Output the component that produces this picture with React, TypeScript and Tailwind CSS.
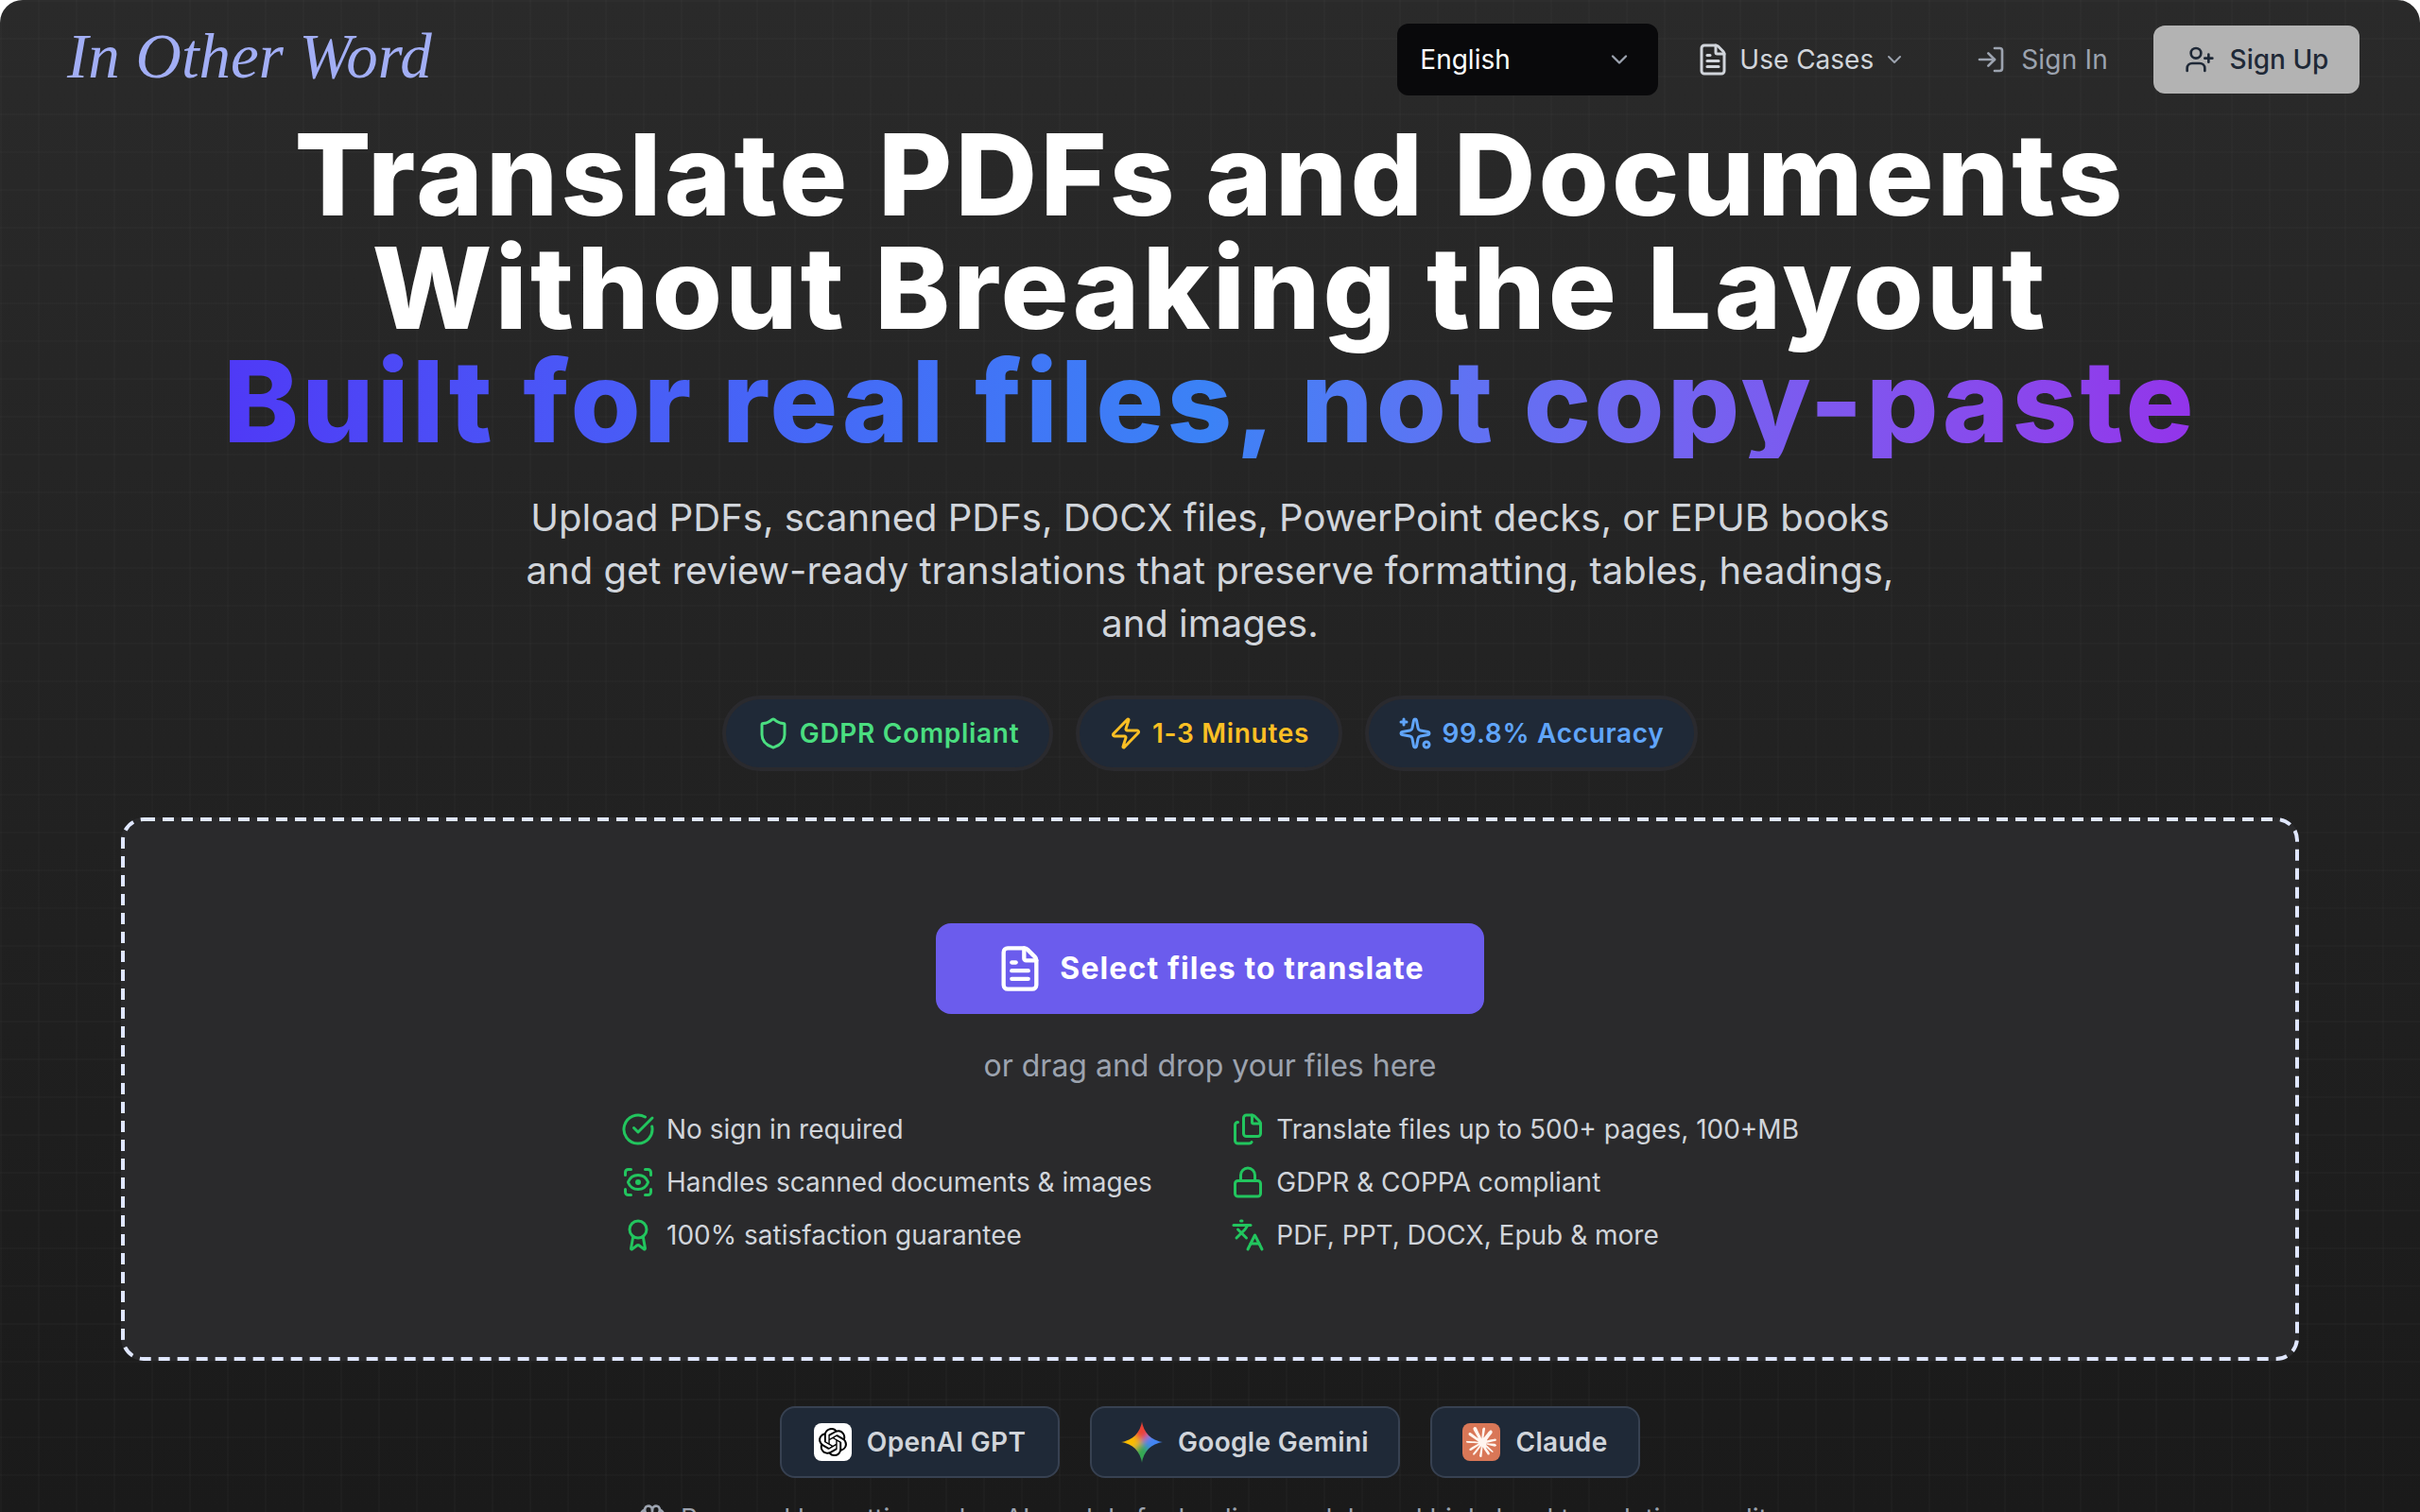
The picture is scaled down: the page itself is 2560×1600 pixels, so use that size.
import { ChevronDown, FileText, LogIn, UserPlus, Shield, Zap, Sparkles, CircleCheckBig, ScanEye, Award, Files, Lock, Languages, Brain } from "lucide-react";
import { SiOpenai, SiClaude } from "react-icons/si";

const Pill = ({ icon, text, color, w }: { icon: React.ReactNode; text: string; color: string; w: string }) => (
  <div className={`flex h-[80px] items-center justify-center gap-[10px] rounded-full border-[4px] border-[#2a2a2e] bg-[#1f2937] text-[28px] font-semibold tracking-[0.7px] ${color} ${w}`}>
    {icon}
    <span>{text}</span>
  </div>
);

const Feature = ({ icon, text }: { icon: React.ReactNode; text: string }) => (
  <div className="flex h-[56px] items-center gap-[12px] whitespace-nowrap text-[28px] text-[#d1d5db]">
    <span className="flex w-[36px] justify-center text-[#22c55e]">{icon}</span>
    <span>{text}</span>
  </div>
);

const Model = ({ icon, text, w }: { icon: React.ReactNode; text: string; w: string }) => (
  <div className={`flex h-[76px] items-center justify-center gap-[16px] rounded-[16px] border-2 border-[#374151] bg-[#1f2937] text-[28px] font-semibold tracking-[0.3px] text-[#d1d5db] ${w}`}>
    {icon}
    <span>{text}</span>
  </div>
);

export default function App() {
  return (
    <div className="relative h-[1600px] w-[2560px] overflow-hidden rounded-t-[24px] bg-gradient-to-b from-[#2a2a2a] to-[#1a1a1a] font-['Inter',sans-serif] text-white">
      <div className="absolute inset-0 bg-[linear-gradient(to_right,rgba(255,255,255,0.015)_2px,transparent_2px),linear-gradient(to_bottom,rgba(255,255,255,0.015)_2px,transparent_2px)] bg-[size:40px_40px]" />
      <div className="relative flex flex-col items-center">
        <header className="flex h-[125px] w-full items-center justify-between pl-[71px] pr-[64px]">
          <div className="pb-[6px] font-['Liberation_Serif',serif] text-[67px] italic leading-none text-[#a2aef5]">In Other Word</div>
          <div className="flex items-center">
            <div className="flex h-[76px] w-[276px] items-center justify-between rounded-[12px] bg-[#09090b] pl-[24px] pr-[27px] text-[28px]">
              <span>English</span>
              <ChevronDown className="h-[28px] w-[28px] text-[#9ca3af]" strokeWidth={2} />
            </div>
            <div className="ml-[40px] flex items-center gap-[10px] text-[28px] text-[#d1d5db]">
              <FileText className="h-[36px] w-[36px]" strokeWidth={2} />
              <span>Use Cases</span>
              <ChevronDown className="h-[24px] w-[24px] text-[#9ca3af]" strokeWidth={2} />
            </div>
            <div className="ml-[74px] flex items-center gap-[16px] text-[28px] tracking-[0.2px] text-[#9ca3af]">
              <LogIn className="h-[32px] w-[32px]" strokeWidth={2} />
              <span>Sign In</span>
            </div>
            <div className="ml-[48px] flex h-[72px] w-[218px] items-center justify-center gap-[16px] rounded-[12px] border-2 border-[#b3b3b3] bg-[#b3b3b3] text-[28px] font-medium text-[#1f2937]">
              <UserPlus className="h-[32px] w-[32px]" strokeWidth={2} />
              <span>Sign Up</span>
            </div>
          </div>
        </header>

        <h1 className="whitespace-nowrap text-center text-[120px] font-extrabold leading-[120px] tracking-[3.2px]">
          <div>Translate PDFs and Documents</div>
          <div>Without Breaking the Layout</div>
          <div className="bg-gradient-to-r from-[#4f39f6] via-[#3b82f6] to-[#9333ea] bg-clip-text text-transparent">Built for real files, not copy-paste</div>
        </h1>

        <p className="mt-[35px] w-[1480px] text-center text-[40px] leading-[56px] text-[#d1d5db]">
          Upload PDFs, scanned PDFs, DOCX files, PowerPoint decks, or EPUB books and get review-ready translations that preserve formatting, tables, headings, and images.
        </p>

        <div className="mt-[48px] flex gap-[24px]">
          <Pill w="w-[350px]" color="text-[#4ade80]" icon={<Shield className="h-[36px] w-[36px]" strokeWidth={2} />} text="GDPR Compliant" />
          <Pill w="w-[282px]" color="text-[#fbbf24]" icon={<Zap className="h-[36px] w-[36px]" strokeWidth={2} />} text="1-3 Minutes" />
          <Pill w="w-[352px]" color="text-[#60a5fa]" icon={<Sparkles className="h-[36px] w-[36px] -scale-x-100" strokeWidth={2} />} text="99.8% Accuracy" />
        </div>

        <div className="relative mt-[49px] flex h-[575px] w-[2304px] flex-col items-center rounded-[24px] bg-[#2a2a2c]">
          <svg className="absolute inset-0 h-full w-full" viewBox="0 0 2304 575" fill="none">
            <rect x="2" y="2" width="2300" height="571" rx="22" stroke="#e0e7ff" strokeWidth="4" strokeDasharray="12 8" />
          </svg>
          <div className="mt-[112px] flex h-[96px] w-[580px] items-center justify-center gap-[16px] rounded-[16px] bg-[#6b5ced] text-[32px] font-bold tracking-[1.1px] text-white">
            <FileText className="h-[52px] w-[52px]" strokeWidth={2} />
            <span>Select files to translate</span>
          </div>
          <div className="mt-[31px] text-[32px] leading-[48px] text-[#9ca3af]">or drag and drop your files here</div>
          <div className="mt-[15px] flex w-[1246px] justify-start">
            <div className="flex w-[648px] flex-col">
              <Feature icon={<CircleCheckBig className="h-[36px] w-[36px]" strokeWidth={2} />} text="No sign in required" />
              <Feature icon={<ScanEye className="h-[36px] w-[36px]" strokeWidth={2} />} text="Handles scanned documents & images" />
              <Feature icon={<Award className="h-[36px] w-[36px]" strokeWidth={2} />} text="100% satisfaction guarantee" />
            </div>
            <div className="flex flex-col">
              <Feature icon={<Files className="h-[36px] w-[36px]" strokeWidth={2} />} text="Translate files up to 500+ pages, 100+MB" />
              <Feature icon={<Lock className="h-[36px] w-[36px]" strokeWidth={2} />} text="GDPR & COPPA compliant" />
              <Feature icon={<Languages className="h-[36px] w-[36px]" strokeWidth={2} />} text="PDF, PPT, DOCX, Epub & more" />
            </div>
          </div>
        </div>

        <div className="mt-[48px] flex gap-[32px]">
          <Model w="w-[296px]" text="OpenAI GPT" icon={
            <span className="flex h-[40px] w-[40px] items-center justify-center rounded-[8px] bg-white">
              <SiOpenai className="h-[30px] w-[30px] text-black" />
            </span>} />
          <Model w="w-[328px]" text="Google Gemini" icon={
            <svg viewBox="0 0 40 40" className="h-[44px] w-[44px]">
              <defs>
                <clipPath id="star">
                  <path d="M20 0C21.5 11 29 18.5 40 20 29 21.5 21.5 29 20 40 18.5 29 11 21.5 0 20 11 18.5 18.5 11 20 0Z" />
                </clipPath>
                <filter id="soft" x="-30%" y="-30%" width="160%" height="160%">
                  <feGaussianBlur stdDeviation="3" />
                </filter>
              </defs>
              <g clipPath="url(#star)">
                <g filter="url(#soft)">
                  <path d="M0 0H40L20 20Z" fill="#ea4335" />
                  <path d="M40 0V40L20 20Z" fill="#4285f4" />
                  <path d="M40 40H0L20 20Z" fill="#34a853" />
                  <path d="M0 40V0L20 20Z" fill="#fbbc04" />
                </g>
              </g>
            </svg>} />
          <Model w="w-[222px]" text="Claude" icon={
            <span className="flex h-[40px] w-[40px] items-center justify-center rounded-[8px] bg-[#d97757]">
              <SiClaude className="h-[32px] w-[32px] text-[#fff5ef]" />
            </span>} />
        </div>

        <div className="mt-[23px] flex items-center gap-[14px] whitespace-nowrap text-[28px] leading-[40px] text-[#9ca3af]">
          <Brain className="h-[32px] w-[32px]" strokeWidth={2} />
          <span>Powered by cutting-edge AI models for leading models and high-level translation quality</span>
        </div>
      </div>
    </div>
  );
}
